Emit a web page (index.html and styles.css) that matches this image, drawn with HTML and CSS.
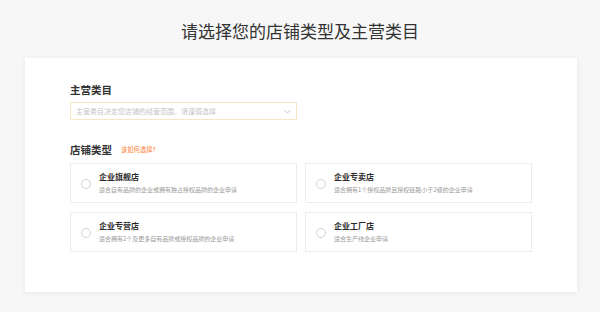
FILE: index.html
```html
<!DOCTYPE html>
<html lang="zh-CN">
<head>
<meta charset="utf-8">
<title>店铺类型</title>
<link rel="stylesheet" href="styles.css">
</head>
<body>
<h1 class="page-title">请选择您的店铺类型及主营类目</h1>
<main class="panel">
  <div class="field-label">主营类目</div>
  <div class="select">
    <span class="placeholder">主营类目决定您店铺的经营范围，请谨慎选择</span>
    <svg class="chevron" width="7" height="5" viewBox="0 0 7 5"><path d="M0.5 1 L3.5 4 L6.5 1" fill="none" stroke="#bdbdbd" stroke-width="0.9"/></svg>
  </div>
  <div class="field-label second">店铺类型<span class="help">该如何选择?</span></div>
  <div class="options">
    <div class="option">
      <span class="radio"></span>
      <div class="option-text">
        <div class="option-title">企业旗舰店</div>
        <div class="option-desc">适合自有品牌的企业或拥有独占授权品牌的企业申请</div>
      </div>
    </div>
    <div class="option">
      <span class="radio"></span>
      <div class="option-text">
        <div class="option-title">企业专卖店</div>
        <div class="option-desc">适合拥有1个授权品牌且授权链路小于2级的企业申请</div>
      </div>
    </div>
    <div class="option">
      <span class="radio"></span>
      <div class="option-text">
        <div class="option-title">企业专营店</div>
        <div class="option-desc">适合拥有2个及更多自有品牌或授权品牌的企业申请</div>
      </div>
    </div>
    <div class="option">
      <span class="radio"></span>
      <div class="option-text">
        <div class="option-title">企业工厂店</div>
        <div class="option-desc">适合生产线企业申请</div>
      </div>
    </div>
  </div>
</main>
</body>
</html>
```
FILE: styles.css
```css
html, body {
  margin: 0;
  padding: 0;
}
body {
  background: #f7f7f7;
  font-family: "Noto Sans CJK SC", "Noto Sans", sans-serif;
  color: #333;
  width: 600px;
  height: 312px;
  overflow: hidden;
}
.page-title {
  margin: 0;
  padding-top: 19px;
  height: 24px;
  line-height: 24px;
  font-size: 17px;
  font-weight: 400;
  text-align: center;
  color: #333;
  margin-bottom: 15px;
}
.panel {
  display: block;
  margin-left: 25px;
  width: 552px;
  height: 234px;
  box-sizing: border-box;
  padding: 25px 45px 0 45px;
  background: #fff;
  box-shadow: 0 1px 6px rgba(0, 0, 0, 0.07);
}
.field-label {
  font-size: 10.5px;
  line-height: 14px;
  font-weight: 700;
  color: #333;
  display: flex;
  align-items: center;
}
.field-label.second {
  margin-top: 23px;
}
.help {
  font-size: 6.3px;
  font-weight: 400;
  color: #ff7b30;
  margin-left: 9px;
}
.select {
  margin-top: 5px;
  width: 227px;
  height: 18px;
  box-sizing: border-box;
  border: 1px solid #f5e8c6;
  display: flex;
  align-items: center;
  justify-content: space-between;
  padding: 0 5px 0 5px;
}
.placeholder {
  font-size: 7px;
  color: #c4c4c4;
  line-height: 10px;
}
.chevron {
  display: block;
}
.options {
  margin-top: 6px;
  display: grid;
  grid-template-columns: 227px 227px;
  column-gap: 8px;
  row-gap: 9px;
}
.option {
  height: 40px;
  box-sizing: border-box;
  border: 1px solid #ececec;
  display: flex;
  align-items: center;
  padding-left: 10px;
}
.radio {
  width: 10px;
  height: 10px;
  box-sizing: border-box;
  border: 1px solid #d4d4d4;
  border-radius: 50%;
  margin-top: 2px;
  flex: none;
}
.option-text {
  margin-left: 8px;
  display: flex;
  flex-direction: column;
}
.option-title {
  font-size: 8px;
  line-height: 10px;
  font-weight: 700;
  color: #2b2b2b;
}
.option-desc {
  margin-top: 4px;
  font-size: 6px;
  line-height: 8px;
  color: #9a9a9a;
}
```
